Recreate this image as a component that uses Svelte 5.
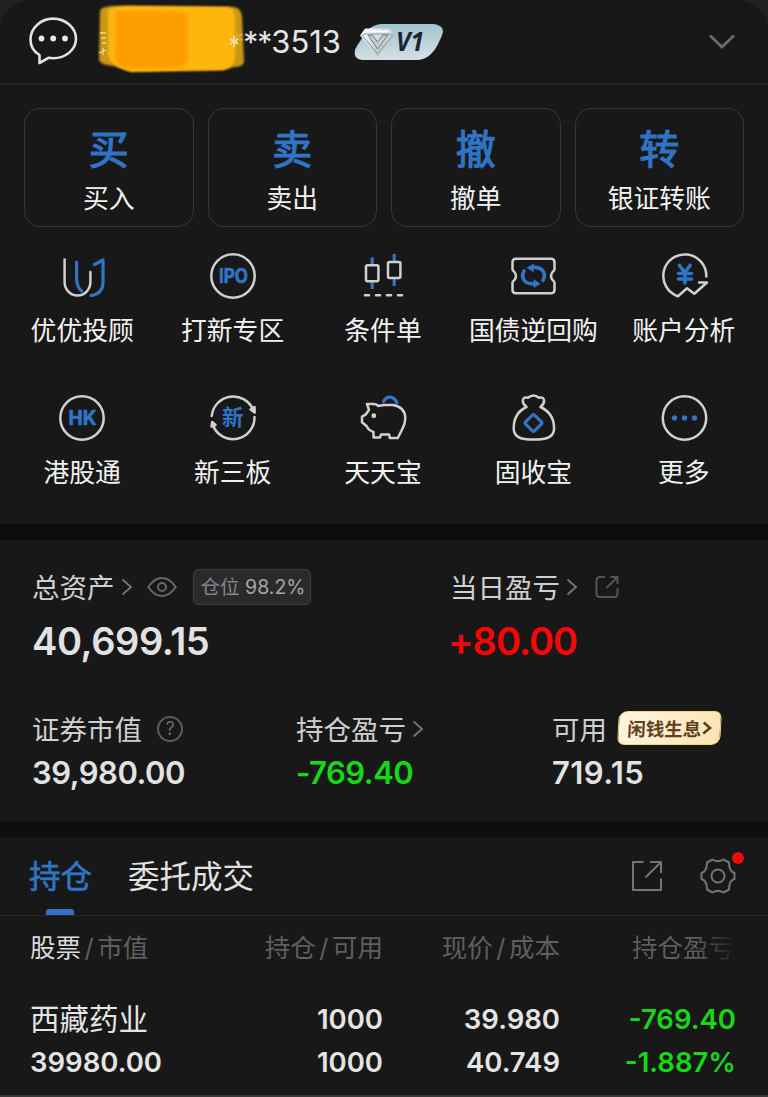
<script lang="ts">
	type Stat = { label: string; value: string; tone?: string };

	const actions = [
		{ glyph: '买', label: '买入' },
		{ glyph: '卖', label: '卖出' },
		{ glyph: '撤', label: '撤单' },
		{ glyph: '转', label: '银证转账' }
	];

	const services = [
		{ icon: 'uu', label: '优优投顾' },
		{ icon: 'ipo', label: '打新专区' },
		{ icon: 'candle', label: '条件单' },
		{ icon: 'ticket', label: '国债逆回购' },
		{ icon: 'analysis', label: '账户分析' },
		{ icon: 'hk', label: '港股通' },
		{ icon: 'neeq', label: '新三板' },
		{ icon: 'pig', label: '天天宝' },
		{ icon: 'bag', label: '固收宝' },
		{ icon: 'more', label: '更多' }
	];

	const total: Stat = { label: '总资产', value: '40,699.15' };
	const today: Stat = { label: '当日盈亏', value: '+80.00', tone: 'up' };
	const market: Stat = { label: '证券市值', value: '39,980.00' };
	const profit: Stat = { label: '持仓盈亏', value: '-769.40', tone: 'down' };
	const cash: Stat = { label: '可用', value: '719.15' };

	const holdings = [
		{
			name: '西藏药业',
			worth: '39980.00',
			held: '1000',
			usable: '1000',
			price: '39.980',
			cost: '40.749',
			gain: '-769.40',
			rate: '-1.887%'
		}
	];

	let tab = $state('holding');
</script>

{#snippet arrow()}
	<svg class="arrow" width="12" height="20" viewBox="0 0 12 20">
		<path d="M1.5 2.5 10 10l-8.5 7.5" />
	</svg>
{/snippet}

<div class="page">
	<section class="card top">
		<header class="header">
			<svg class="bubble" width="50" height="50" viewBox="0 0 50 50">
				<path
					d="M11.5 39C5.5 35.500 2.500 30 2.500 23.500 2.500 11.800 13 2.600 25.200 2.600S48 11.800 48 22.800 37.500 42.200 25.200 42.200c-2 0-3-.1-4.700-.4L11.500 47z"
				/>
				<circle cx="13.500" cy="22.500" r="2.900" />
				<circle cx="25.200" cy="22.500" r="2.900" />
				<circle cx="37" cy="22.500" r="2.900" />
			</svg>
			<div class="account">
				<span class="number"><span class="stars">***</span>3513</span>
				<svg class="mask" width="156" height="76" viewBox="0 0 156 76">
					<defs>
						<filter id="soft" x="-10%" y="-10%" width="120%" height="120%">
							<feGaussianBlur stdDeviation="1.2" />
						</filter>
						<filter id="softer" x="-10%" y="-10%" width="120%" height="120%">
							<feGaussianBlur stdDeviation="1.8" />
						</filter>
					</defs>
					<path
						d="M6 8Q8 5 17 4L140 5q7 1 8 9l2 46q-1 5-10 5l-12 3-94 1-14-5Q6 63 5 58z"
						fill="#d9a21a"
						fill-opacity="0.92"
						filter="url(#soft)"
					/>
					<path
						d="M14 8Q22 4 34 4l100 1q7 2 7 12v40q-2 9-12 11l-92 2-12-5q-11-5-11-14z"
						fill="#feb60c"
						filter="url(#soft)"
					/>
					<path d="M22 9h66q6 3 6 12v36q-2 8-10 9H30q-9-4-9-12z" fill="#ff9e04" filter="url(#softer)" />
					<path d="M6 31h6M7 36h5M8 41h4M5 51l7-3M9 46v7" stroke="#f0d98c" stroke-width="1.3" />
					<path d="M140 34v11M136 37l8 5M144 37l-8 5" stroke="#f3e3a8" stroke-width="1.6" />
				</svg>
			</div>
			<svg class="level" width="92" height="40" viewBox="0 0 92 40">
				<defs>
					<linearGradient id="plate" x1="0" y1="0" x2="0.1" y2="1">
						<stop offset="0" stop-color="#9dc2cb" />
						<stop offset="1" stop-color="#d3dfe4" />
					</linearGradient>
					<linearGradient id="gem" x1="0" y1="0" x2="1" y2="1">
						<stop offset="0" stop-color="#fff" />
						<stop offset="1" stop-color="#a3b0b6" />
					</linearGradient>
				</defs>
				<path
					d="M28 2h53q9 1 9 8-1 4-4 10-8 18-23 18H9q-9-1-7-10 2-5 6-10Q15 3 28 2z"
					fill="url(#plate)"
				/>
				<path d="M12 6.500h25l4 7L24.500 35 7 13.500z" fill="url(#gem)" />
				<path d="M12 12h25l3 1.500-15.500 18L9 13.500z" fill="none" stroke="#8b989e" stroke-width="1" />
				<path
					d="M15 13l9.500 14L35 13l-5 0-5.500 7-5-7z"
					fill="#c3cdd1"
					stroke="#6f7d84"
					stroke-width="1"
				/>
				<path d="M13 9.500h23" fill="none" stroke="#fff" stroke-width="1.6" />
				<text x="43" y="29" textLength="28" lengthAdjust="spacingAndGlyphs">V1</text>
			</svg>
			<svg class="fold" width="28" height="18" viewBox="0 0 28 18">
				<path d="M2 2.500 14 14 26 2.500" />
			</svg>
		</header>

		<div class="actions">
			{#each actions as action}
				<button class="action">
					<span class="action-glyph">{action.glyph}</span>
					<span class="action-label">{action.label}</span>
				</button>
			{/each}
		</div>

		<div class="services">
			{#each services as service}
				<div class="service">
					<svg class="icon" width="52" height="52" viewBox="0 0 52 52">
						{#if service.icon === 'uu'}
							<path d="M8.600 9.500V32a12.900 13.500 0 0 0 25.800 0V22" />
							<path class="blue" d="M20.600 12v16q0 9 5 13M38.500 14.500 47 10v22q0 12-12 13.500" />
						{:else if service.icon === 'ipo'}
							<circle cx="26" cy="26" r="21.700" />
							<text x="12" y="33" font-size="19.500" textLength="29" lengthAdjust="spacingAndGlyphs"
								>IPO</text
							>
						{:else if service.icon === 'candle'}
							<path class="blue butt" d="M15.200 7.500V15M15.200 32v7M37.200 4v8M37.200 28v8" />
							<rect x="9" y="15.300" width="12.400" height="16" rx="1.500" />
							<rect x="31" y="12" width="12.400" height="16" rx="1.500" />
							<path d="M8 45.300h4M19 45.300h4M30 45.300h4M41 45.300h4" />
						{:else if service.icon === 'ticket'}
							<path
								d="M9.500 8.800H44q3.500 0 3.500 3.500v7q0 1.200-1.500 2.200-4 4.500 0 9 1.500 1 1.500 2.200v7q0 3.500-3.500 3.500H9q-3.500 0-3.500-3.500v-7q0-1.200 1.500-2.200 4-4.500 0-9-1.500-1-1.500-2.200v-7q0-3.500 3.500-3.500z"
							/>
							<path class="blue bold" d="M17 21C13 29 19 34.300 27 33.800" />
							<path class="blue bold" d="M36 30.500C40 22.500 34.500 16.500 26 17.500" />
							<path class="fill" d="M26.500 29 33.500 33.700 27 38zM27 13.500 19.500 17.800l7 4.500z" />
						{:else if service.icon === 'analysis'}
							<path d="M48.300 26.500A21.500 21.500 0 1 0 20 46.300l9-8 7.300 5.500L49 32.500h-8" />
							<path class="blue bold" d="M21.500 15.500l5.300 7 5.300-7M20.500 23.500h13M20.500 29h13M26.900 23v10" />
						{:else if service.icon === 'hk'}
							<circle cx="26" cy="26" r="21.700" />
							<text x="12.500" y="33" font-size="20" textLength="28" lengthAdjust="spacingAndGlyphs"
								>HK</text
							>
						{:else if service.icon === 'neeq'}
							<path d="M4.800 24A21.500 21.500 0 0 1 46 17.500M47.500 25A21.500 21.500 0 0 1 6 33.500" />
							<path class="white" d="M43.500 17.500l4-2.500.2 5.500zM8.500 33 5.200 30 4.500 34.500z" />
							<text class="hanzi" x="15" y="33.300" font-size="21.500">新</text>
						{:else if service.icon === 'pig'}
							<path class="blue" d="M26.500 9.500C30 3 37 4 40 11" />
							<path
								d="M10 12h6q4 0 5 2l6-1h9q12 2 12.300 13 0 6-3 11l-4.500 9h-8l-.6-3.400H24l-1 2.900-6.500.1V40Q11 38 10 34.500L5 30.200v-5.500l3.500-2L12 18z"
							/>
							<circle class="white" cx="16.800" cy="23.800" r="1.2" />
						{:else if service.icon === 'bag'}
							<path
								d="M19.500 15C9 20 6.300 29 6.800 38 8 47.300 18 47.500 26.500 47.500S46 47.300 47 38c.5-9-3-18-13.500-23 6-5 3.500-11-1.500-9.300q-5.500-4.500-11 0c-5.500-1.700-7.500 4.300-1.500 9.300z"
							/>
							<rect
								class="blue"
								x="20.200"
								y="24.700"
								width="12.600"
								height="12.600"
								rx="1.500"
								transform="rotate(45 26.500 31)"
							/>
						{:else}
							<circle cx="26.500" cy="26" r="21.700" />
							<circle class="fill" cx="16.500" cy="26" r="2.700" />
							<circle class="fill" cx="26.500" cy="26" r="2.700" />
							<circle class="fill" cx="36.500" cy="26" r="2.700" />
						{/if}
					</svg>
					<span>{service.label}</span>
				</div>
			{/each}
		</div>
	</section>

	<section class="card assets">
		<div class="stats wide">
			<div class="stat">
				<div class="stat-label">
					<span>{total.label}</span>
					{@render arrow()}
					<svg class="eye" width="30" height="22" viewBox="0 0 30 22">
						<path d="M1.200 11Q7.500 2 15 2t13.800 9Q22.500 20 15 20T1.200 11z" />
						<circle cx="15" cy="11" r="4" />
					</svg>
					<span class="ratio">仓位 <b>98.2%</b></span>
				</div>
				<div class="stat-value">{total.value}</div>
			</div>
			<div class="stat">
				<div class="stat-label">
					<span>{today.label}</span>
					{@render arrow()}
					<svg class="share" width="24" height="24" viewBox="0 0 24 24">
						<path d="M10 2H5Q1.500 2 1.500 5.500v13q0 3.500 3.500 3.500h14q3.500 0 3.500-3.500V13" />
						<path d="M11.500 13 22 2.500M15.500 2h7v7" />
					</svg>
				</div>
				<div class="stat-value {today.tone}">{today.value}</div>
			</div>
		</div>
		<div class="stats">
			<div class="stat">
				<div class="stat-label">
					<span>{market.label}</span>
					<i class="help">?</i>
				</div>
				<div class="stat-value">{market.value}</div>
			</div>
			<div class="stat">
				<div class="stat-label">
					<span>{profit.label}</span>
					{@render arrow()}
				</div>
				<div class="stat-value {profit.tone}">{profit.value}</div>
			</div>
			<div class="stat">
				<div class="stat-label">
					<span>{cash.label}</span>
					<div class="promo">
						闲钱生息<svg width="10" height="16" viewBox="0 0 10 16"><path d="M1.500 2.500 8 8l-6.500 5.500" /></svg>
					</div>
				</div>
				<div class="stat-value loose">{cash.value}</div>
			</div>
		</div>
	</section>

	<section class="card positions">
		<nav class="tabs">
			<button class="tab" class:active={tab === 'holding'} onclick={() => (tab = 'holding')}>
				持仓
			</button>
			<button class="tab" class:active={tab === 'orders'} onclick={() => (tab = 'orders')}>
				委托成交
			</button>
			<div class="tools">
				<svg width="32" height="32" viewBox="0 0 32 32">
					<path d="M12.500 2H2v28h28V18.500M14.500 17.500 29.500 2.500M19 2h11v11" />
				</svg>
				<span class="settings">
					<svg width="40" height="40" viewBox="0 0 40 40">
						<path
							d="M14.500 3.500q5.500 3.500 11 0l5.500 3q0 9 5.500 10.500v6Q31 24.500 31 33.500l-5.500 3q-5.500-3.500-11 0l-5.500-3Q9 24.500 3.500 23v-6Q9 15.500 9 6.500z"
						/>
						<circle cx="20" cy="20" r="6.500" />
					</svg>
					<i class="dot"></i>
				</span>
			</div>
		</nav>

		<div class="row head">
			<span><em>股票</em><s>/</s>市值</span>
			<span>持仓<s>/</s>可用</span>
			<span>现价<s>/</s>成本</span>
			<span class="fade">持仓盈亏</span>
		</div>
		{#each holdings as item}
			<div class="row body">
				<div><span class="name">{item.name}</span><span>{item.worth}</span></div>
				<div><span>{item.held}</span><span>{item.usable}</span></div>
				<div><span>{item.price}</span><span>{item.cost}</span></div>
				<div class="down"><span>{item.gain}</span><span>{item.rate}</span></div>
			</div>
		{/each}
	</section>
</div>

<style>
	:global(body) {
		background: #0d0d0d;
	}

	.page {
		width: 768px;
		height: 1097px;
		box-sizing: border-box;
		overflow: hidden;
		display: flex;
		flex-direction: column;
		gap: 16px;
		background: #0d0d0d;
		color: #e4e4e4;
		font-family: Inter, 'Noto Sans CJK SC', sans-serif;
	}

	svg {
		display: block;
		flex: none;
		fill: none;
	}

	button {
		padding: 0;
		border: none;
		background: none;
		color: inherit;
		font: inherit;
	}

	.card {
		background: #181818;
	}

	.top {
		height: 524px;
		background:
			radial-gradient(circle at 30px 30px, #181818 29.5px, #222 30.5px) 0 0 / 30px 30px no-repeat,
			radial-gradient(circle at 0 30px, #181818 29.5px, #222 30.5px) 100% 0 / 30px 30px no-repeat,
			#181818;
	}

	.header {
		display: flex;
		align-items: center;
		height: 83px;
		padding: 0 32px 0 28px;
		border-bottom: 2px solid #232323;
	}

	.bubble {
		margin-bottom: 1px;
	}

	.bubble path {
		stroke: #e2e2e2;
		stroke-width: 2.6;
		stroke-linejoin: round;
	}

	.bubble circle {
		fill: #e8e8e8;
	}

	.account {
		position: relative;
		width: 263px;
		text-align: right;
		font-size: 31px;
		line-height: 40px;
	}

	.number {
		color: #e6e6e6;
	}

	.stars {
		letter-spacing: -1px;
		font-size: 30px;
	}

	.mask {
		position: absolute;
		left: 16px;
		top: -20px;
	}

	.level {
		margin-left: 12px;
	}

	.level text {
		fill: #1b2433;
		font: italic 700 27px 'Open Sans', sans-serif;
	}

	.fold {
		margin-left: auto;
	}

	.fold path {
		stroke: #6b6b6b;
		stroke-width: 2.8;
	}

	.actions {
		display: grid;
		grid-template-columns: repeat(4, 1fr);
		gap: 14px;
		padding: 23px 24px 0;
	}

	.action {
		display: flex;
		flex-direction: column;
		align-items: center;
		height: 119px;
		box-sizing: border-box;
		padding-top: 15px;
		border: 1.5px solid #363636;
		border-radius: 16px;
	}

	.action-glyph {
		color: #2f74c5;
		font-size: 40px;
		line-height: 52px;
		-webkit-text-stroke: 1.2px #2f74c5;
	}

	.action-label {
		color: #f2f2f2;
		font-size: 25.8px;
		line-height: 46px;
	}

	.services {
		display: grid;
		grid-template-columns: repeat(5, 1fr);
		row-gap: 44px;
		padding: 23px 9px 0 7px;
	}

	.service {
		display: flex;
		flex-direction: column;
		align-items: center;
		height: 98px;
		color: #f2f2f2;
		font-size: 25.8px;
		line-height: 57px;
		white-space: nowrap;
	}

	.icon {
		stroke: #d0d0d0;
		stroke-width: 2.5;
		stroke-linecap: round;
		stroke-linejoin: round;
	}

	.icon .blue {
		stroke: #2f74c5;
		stroke-width: 3.2;
	}

	.icon .bold {
		stroke-width: 3.6;
	}

	.icon .butt {
		stroke-linecap: butt;
	}

	.icon .fill {
		fill: #2f74c5;
		stroke: none;
	}

	.icon .white {
		fill: #d0d0d0;
	}

	.icon text {
		fill: #2f74c5;
		stroke: #2f74c5;
		stroke-width: 0.7;
		font-weight: 700;
	}

	.icon .hanzi {
		stroke: none;
	}

	.assets {
		height: 281px;
		box-sizing: border-box;
		padding: 28px 32px 0;
	}

	.stats {
		display: grid;
		grid-template-columns: 264px 256px 1fr;
	}

	.wide {
		grid-template-columns: 418px 1fr;
		height: 142px;
	}

	.stat-label {
		display: flex;
		align-items: center;
		height: 38px;
		color: #cfcfcf;
		font-size: 27.5px;
	}

	.stat-label > span:first-child {
		margin-top: -2px;
	}

	.stat-value {
		color: #e2e2e2;
		font-size: 31px;
		font-weight: 600;
		line-height: 50px;
		letter-spacing: -0.5px;
	}

	.loose {
		letter-spacing: 0.4px;
	}

	.wide .stat-value {
		font-size: 38px;
		line-height: 70px;
		letter-spacing: -0.4px;
	}

	.stats .up {
		margin-left: -2px;
		color: #fa0505;
		letter-spacing: -1px;
	}

	.stats .down,
	.down {
		color: #17d817;
	}

	.arrow {
		margin-left: 6px;
	}

	.arrow path {
		stroke: #777;
		stroke-width: 1.8;
	}

	.eye {
		margin-left: 14px;
		stroke: #686868;
		stroke-width: 2;
	}

	.ratio {
		box-sizing: border-box;
		width: 118px;
		height: 36px;
		margin-left: 16px;
		padding-left: 3px;
		border: 1px solid #3b3b3d;
		border-radius: 5px;
		background: #2a2a2c;
		color: #858585;
		font-size: 19.5px;
		line-height: 35px;
		text-align: center;
		white-space: nowrap;
	}

	.ratio b {
		color: #a6a6a6;
		font-weight: 400;
	}

	.share {
		margin-left: 17px;
		stroke: #555;
		stroke-width: 2;
	}

	.help {
		box-sizing: border-box;
		width: 26px;
		height: 26px;
		margin-left: 15px;
		border: 2px solid #5c5c5c;
		border-radius: 50%;
		color: #6c6c6c;
		font-size: 18px;
		font-style: normal;
		line-height: 22px;
		text-align: center;
	}

	.promo {
		display: flex;
		align-items: center;
		justify-content: center;
		box-sizing: border-box;
		width: 103px;
		height: 34px;
		margin: -2px 0 0 11px;
		border: 1px solid #f7d574;
		border-radius: 9px 7px 9px 7px;
		background: linear-gradient(110deg, #fff6e2, #fbe3b2);
		color: #61401f;
		font-size: 18.5px;
		font-weight: 700;
		white-space: nowrap;
		transform: skewX(-3deg);
	}

	.promo path {
		stroke: #61401f;
		stroke-width: 2.6;
	}

	.positions {
		height: 258px;
		border-bottom: 2px solid #3a3a3a;
	}

	.tabs {
		display: flex;
		gap: 36px;
		height: 78px;
		padding: 0 30px 0 29px;
		border-bottom: 1px solid #262626;
	}

	.tab {
		position: relative;
		height: 78px;
		color: #e2e2e2;
		font-size: 31.5px;
		line-height: 80px;
	}

	.tab.active {
		color: #2f74c5;
		-webkit-text-stroke: 0.6px #2f74c5;
	}

	.tab.active::after {
		content: '';
		position: absolute;
		left: 17px;
		bottom: 0;
		width: 28px;
		height: 6px;
		border-radius: 3px 3px 0 0;
		background: #2f74c5;
	}

	.tools {
		display: flex;
		align-items: center;
		gap: 35px;
		margin-left: auto;
		stroke: #757575;
		stroke-width: 2;
		stroke-linejoin: round;
	}

	.settings {
		position: relative;
	}

	.dot {
		position: absolute;
		top: -4px;
		right: -6px;
		width: 12px;
		height: 12px;
		border-radius: 50%;
		background: #f00a0a;
	}

	.row {
		display: grid;
		grid-template-columns: 178px 175px 177px 176px;
		padding-left: 30px;
		text-align: right;
	}

	.row > :first-child {
		text-align: left;
	}

	.head {
		color: #5f5f5f;
		font-size: 25.5px;
		line-height: 64px;
	}

	.head em {
		color: #dcdcdc;
		font-style: normal;
	}

	.head s {
		margin: 0 3.5px;
		text-decoration: none;
	}

	.head .fade {
		margin-right: 2px;
		background: linear-gradient(90deg, #5f5f5f 78%, #202020 100%);
		background-clip: text;
		color: transparent;
	}

	.body {
		padding-top: 18px;
		font-size: 27.5px;
		font-weight: 600;
		line-height: 43px;
	}

	.body span {
		display: block;
	}

	.body .name {
		font-size: 29.5px;
		font-weight: 400;
	}
</style>
